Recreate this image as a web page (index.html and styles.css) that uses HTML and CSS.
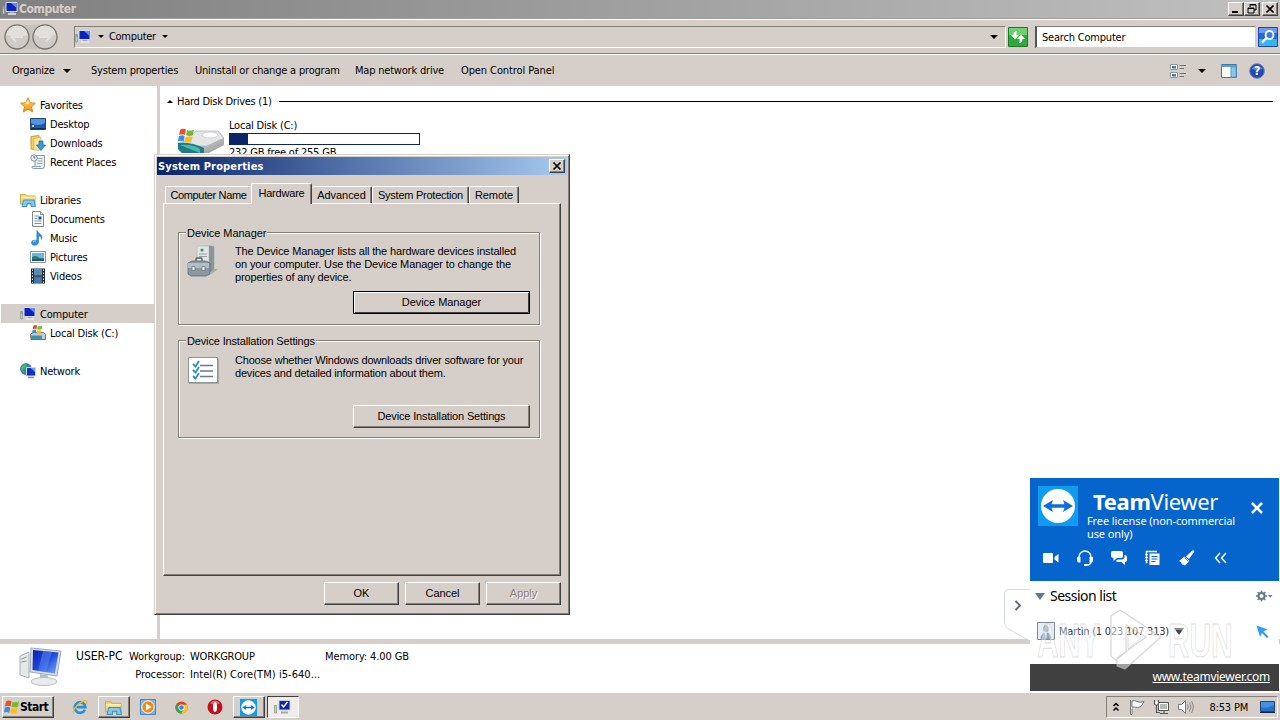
FILE: index.html
```
<!DOCTYPE html>
<html lang="en">
    <head>
        <meta charset="UTF-8" />
        <meta name="viewport" content="width=device-width, initial-scale=1.0" />
        <title>Computer</title>
        <link rel="stylesheet" href="styles.css">
    </head>
    <body>
        <svg width="0" height="0" class="defs">
            <defs>
                <linearGradient id="screenBlue" x1="0" y1="0" x2="1" y2="1">
                    <stop offset="0" stop-color="#0a1fae" />
                    <stop offset="0.5" stop-color="#1d49d8" />
                    <stop offset="1" stop-color="#7fb0ff" />
                </linearGradient>
                <linearGradient id="metal" x1="0" y1="0" x2="1" y2="1">
                    <stop offset="0" stop-color="#fafafa" />
                    <stop offset="1" stop-color="#8e9294" />
                </linearGradient>
                <linearGradient id="gold" x1="0" y1="0" x2="0" y2="1">
                    <stop offset="0" stop-color="#ffe27a" />
                    <stop offset="1" stop-color="#f08a12" />
                </linearGradient>
            </defs>
            <symbol id="pc" viewBox="0 0 16 16">
                <path d="M0.500 5.500h2v7.500h-2z" fill="#c9ccc8" stroke="#8a9088" stroke-width="0.700" />
                <path d="M1 7h1.500" stroke="#4fa04f" />
                <path d="M4 1.500h11v9H4z" fill="#0c22c0" stroke="#d5dcec" />
                <path d="M9 2h5.500v5z" fill="#5e8cf0" />
                <path d="M8 11h4v1.500H8z" fill="#a4a8ac" />
                <path d="M6 13h8" stroke="#e8eaec" stroke-width="1.500" />
            </symbol>
            <symbol id="flag" viewBox="0 0 16 16">
                <path d="M2 2.500C4 1 6 1.500 7.500 2.300L6.500 7.500C5 6.500 3 6.500 1 7.500z" fill="#e8502a" />
                <path d="M8.500 2.800C10 3.600 12.500 3.500 15 2.500L14 7.800C12 8.600 9.500 8.500 7.500 7.800z" fill="#7ab82e" />
                <path d="M0.800 8.700C3 7.500 5 7.600 6.200 8.600L5.200 13.800C3.500 12.600 1.800 12.700 0 13.500z" fill="#3a8fe0" />
                <path d="M7.200 9C9.500 9.800 11.500 9.800 13.700 9L12.500 14C10.500 14.800 8.500 14.800 6.200 14z" fill="#fbbc1c" />
            </symbol>
            <symbol id="star" viewBox="0 0 16 16">
                <path d="M8 0.800L10.200 5.700 15.400 6.200 11.500 9.700 12.700 15 8 12.200 3.300 15 4.500 9.700 0.600 6.200 5.800 5.700z" fill="url(#gold)" stroke="#e08a1c" />
                <path d="M8 3L9.200 6.800H5z" fill="#fff3b0" />
            </symbol>
            <symbol id="desk" viewBox="0 0 16 16">
                <path d="M0.500 2.500h15v11h-15z" fill="#2457a8" stroke="#28446e" />
                <path d="M1 3h14v4Q8 11 1 7z" fill="#4f97e0" />
                <path d="M1 12h14v1.500H1z" fill="#123060" />
                <path d="M2 9h2v2H2z" fill="#a6cdf0" />
            </symbol>
            <symbol id="down" viewBox="0 0 16 16">
                <path d="M1 1.500L9 0.500V15L1 14z" fill="#f0cf62" stroke="#c99c34" />
                <path d="M4 3.500L11 2V15H4z" fill="#f9e79a" stroke="#d2aa44" stroke-width="0.600" />
                <path d="M9 6h4v4h2.500L11 15.500 6.500 10H9z" fill="#2f9ae6" stroke="#1668b0" stroke-width="0.700" />
            </symbol>
            <symbol id="recent" viewBox="0 0 16 16">
                <path d="M5 1.500h9.500v11q0 2-2 2H3.500q-2 0-1.500-2h3z" fill="#edf1f4" stroke="#8a99a6" />
                <path d="M7.500 4.500h5M7.500 7h5M7.500 9.500h5M5 12.500h6" stroke="#8fa6b8" />
                <circle cx="4" cy="4" r="3.200" fill="#e8edf0" stroke="#8796a2" />
                <path d="M4 2v2h1.500" fill="none" stroke="#566" stroke-width="0.800" />
            </symbol>
            <symbol id="lib" viewBox="0 0 16 16">
                <path d="M0.500 2.500h5l1 1.500h8.500v8H0.500z" fill="#f5d878" stroke="#cda844" />
                <path d="M1 5.500h14" stroke="#fff4bb" stroke-width="1.500" />
                <path d="M3.500 8h10.500l1.500 6.500H11V11.500H7V14.500H2z" fill="#7fc8ee" stroke="#3c92c8" />
            </symbol>
            <symbol id="doc" viewBox="0 0 16 16">
                <path d="M2.500 0.500h8l3 3v12h-11z" fill="#fff" stroke="#7b8a99" />
                <path d="M10.500 0.500v3h3" fill="#d9e4ee" stroke="#7b8a99" />
                <path d="M4.500 5h4M4.500 7.500h3M4.500 10h7M4.500 12.500h7" stroke="#6b94c0" />
                <path d="M8.500 5.500h3v3h-3z" fill="#234f88" />
            </symbol>
            <symbol id="music" viewBox="0 0 16 16">
                <path d="M7 0.500C8 4 13.500 4 11.500 9.500 11.500 6.500 10 6 8.500 6V12C8.500 16 1.500 16.500 1.500 12.800 1.500 10.500 4.500 9.500 6.800 10.500z" fill="#2d93dc" stroke="#1a6fb8" stroke-width="0.600" />
                <path d="M3 12q1-1.500 3-1" stroke="#a8dcfa" fill="none" />
            </symbol>
            <symbol id="pic" viewBox="0 0 16 16">
                <path d="M0.500 2.500h15v11h-15z" fill="#fff" stroke="#8694a2" />
                <path d="M2 4h12v8H2z" fill="#68b5e6" />
                <path d="M2 8q4-2 6 0t6 1v3H2z" fill="#2c7c6c" />
                <path d="M2 10.500h12v1.500H2z" fill="#1d4a68" />
            </symbol>
            <symbol id="video" viewBox="0 0 16 16">
                <path d="M1 0.500h14v15H1z" fill="#222b33" />
                <path d="M4 1h8v6.500H4z" fill="#4b93cc" />
                <path d="M4 8.500h8V15H4z" fill="#3a7ab4" />
                <path d="M6 3l4 2-3 2zM6 11l3-1 1 3z" fill="#b06a38" />
                <path d="M2.500 1.500v14M13.500 1.500v14" stroke="#dfe5ea" stroke-dasharray="1.500 1.500" />
            </symbol>
            <symbol id="disk" viewBox="0 0 16 16">
                <path d="M0.500 9l3-1.500h10l2 2v5H1z" fill="#c3cbd0" stroke="#67747c" />
                <path d="M1 10.500h11v3.500H1z" fill="#3b96ab" />
                <use href="#flag" x="2" y="-1" width="11" height="11" />
            </symbol>
            <symbol id="net" viewBox="0 0 16 16">
                <circle cx="6" cy="6" r="5.500" fill="#2c7fd0" stroke="#1a579c" stroke-width="0.600" />
                <path d="M2 3q3-3 5-1.500L6 5 3 7 5 10Q1 9 1 5z" fill="#4fb45a" />
                <path d="M6.500 4.500h9v8.500h-9z" fill="#1330b8" stroke="#cfd8e4" />
                <path d="M10.500 5h4.500v4z" fill="#6c9cf4" />
                <path d="M8 14.500h6" stroke="#8a9096" stroke-width="1.500" />
            </symbol>
            <symbol id="tv" viewBox="0 0 40 40">
                <path d="M0 0h40v40H0z" fill="#0e9bf0" />
                <circle cx="20" cy="20" r="17" fill="#fff" />
                <path d="M5 20l10-6-1.500 4.200h13L25 14l10 6-10 6 1.500-4.200h-13L15 26z" fill="#0a6fd6" />
            </symbol>
        </svg>

        <div class="desktop">
            <div class="titlebar">
                <svg class="ic16"><use href="#pc" /></svg>
                <span class="title">Computer</span>
                <div class="win-btns">
                    <span class="win-btn"><svg viewBox="0 0 14 12"><path d="M3 9h6" stroke="#000" stroke-width="2" /></svg></span>
                    <span class="win-btn"><svg viewBox="0 0 14 12"><path d="M5 2h6v5H9M5 1.500h6M5 1v3M3 5h6v5H3zM3 5.500h6" fill="none" stroke="#000" /></svg></span>
                    <span class="win-btn last"><svg viewBox="0 0 14 12"><path d="M3.500 2.500l7 7M10.500 2.500l-7 7" stroke="#000" stroke-width="1.700" /></svg></span>
                </div>
            </div>

            <div class="addressbar">
                <svg class="nav-btns" width="56" height="28" viewBox="0 0 56 28">
                    <path d="M14 2h28v24H14z" fill="#c6c2bc" />
                    <circle cx="14" cy="14" r="12" fill="#cfcbc6" stroke="#77736e" stroke-width="1.300" />
                    <circle cx="42" cy="14" r="12" fill="#cfcbc6" stroke="#77736e" stroke-width="1.300" />
                    <path d="M3.500 12a10.500 9.500 0 0 1 21 0q-10 3-21 0zM31.500 12a10.500 9.500 0 0 1 21 0q-10 3-21 0z" fill="#e2dfdb" />
                    <path d="M20 14H9M13 9.500L8.500 14l4.500 4.500M36 14h11M43 9.500l4.500 4.500-4.500 4.500" fill="none" stroke="#e4e1dd" stroke-width="2" />
                </svg>
                <div class="address">
                    <svg class="ic16"><use href="#pc" /></svg>
                    <span class="arrow small"></span>
                    <span class="crumb">Computer</span>
                    <span class="arrow small"></span>
                    <span class="arrow end"></span>
                </div>
                <svg class="refresh" width="20" height="20" viewBox="0 0 20 20">
                    <path d="M0.500 0.500h19v19h-19z" fill="#2fa83c" stroke="#1c7a2a" />
                    <path d="M1 1h18v7H1z" fill="#6fd06f" />
                    <path d="M9 4Q5.500 4 5.500 8H3l4 4.500L11 8H8.500Q8 6 9 4zM11 16q3.500 0 3.500-4H17l-4-4.500L9 12h2.500q.5 2-.5 4z" fill="#fff" />
                </svg>
                <div class="search">Search Computer</div>
                <svg class="search-btn" width="20" height="20" viewBox="0 0 20 20">
                    <path d="M0.500 0.500h19v19h-19z" fill="#2468d8" stroke="#1a4aa8" />
                    <path d="M1 12h18v7H1z" fill="#38b4ee" />
                    <path d="M1 1h18v5H1z" fill="#6a9aee" />
                    <circle cx="11.500" cy="8" r="4" fill="#3f7be0" stroke="#fff" stroke-width="1.800" />
                    <path d="M8.500 11L4 15.500" stroke="#fff" stroke-width="2.400" />
                </svg>
            </div>

            <div class="toolbar">
                <span class="tool organize">Organize</span>
                <span class="arrow"></span>
                <span class="tool sysprops">System properties</span>
                <span class="tool uninstall">Uninstall or change a program</span>
                <span class="tool mapdrive">Map network drive</span>
                <span class="tool control">Open Control Panel</span>
                <div class="tool-right">
                    <svg width="17" height="16" viewBox="0 0 17 16">
                        <path d="M0.500 1.500h7v5h-7zM0.500 9.500h7v5h-7z" fill="#fff" stroke="#8d989f" />
                        <path d="M2 3h4v2.500H2zM2 11h4v2.500H2z" fill="#4478a4" />
                        <path d="M9.500 2.500H16M9.500 5.500H14M9.500 10.500H16M9.500 13.500H14" stroke="#6d7378" />
                    </svg>
                    <span class="arrow"></span>
                    <svg class="pane" width="16" height="14" viewBox="0 0 16 14">
                        <path d="M0.500 0.500h15v13h-15z" fill="#fff" stroke="#3f78a8" />
                        <path d="M0.500 2h15" stroke="#5aa0cc" stroke-width="2" />
                        <path d="M10 3h5v10h-5z" fill="#8cc8ea" stroke="#5a9ac4" />
                    </svg>
                    <svg width="16" height="16" viewBox="0 0 16 16">
                        <circle cx="8" cy="8" r="7.300" fill="#2347b4" stroke="#6a7fb8" />
                        <path d="M2.500 6a6 5 0 0 1 11 0q-5 2-11 0z" fill="#5c82dc" />
                        <text x="8" y="12.300" class="help">?</text>
                    </svg>
                </div>
            </div>

            <div class="content">
                <div class="sidebar">
                    <div class="section">
                        <div class="item head"><svg class="ic16"><use href="#star" /></svg><span>Favorites</span></div>
                        <div class="item"><svg class="ic16"><use href="#desk" /></svg><span>Desktop</span></div>
                        <div class="item"><svg class="ic16"><use href="#down" /></svg><span>Downloads</span></div>
                        <div class="item"><svg class="ic16"><use href="#recent" /></svg><span>Recent Places</span></div>
                    </div>
                    <div class="section">
                        <div class="item head"><svg class="ic16"><use href="#lib" /></svg><span>Libraries</span></div>
                        <div class="item"><svg class="ic16"><use href="#doc" /></svg><span>Documents</span></div>
                        <div class="item"><svg class="ic16"><use href="#music" /></svg><span>Music</span></div>
                        <div class="item"><svg class="ic16"><use href="#pic" /></svg><span>Pictures</span></div>
                        <div class="item"><svg class="ic16"><use href="#video" /></svg><span>Videos</span></div>
                    </div>
                    <div class="section">
                        <div class="item head selected"><svg class="ic16"><use href="#pc" /></svg><span>Computer</span></div>
                        <div class="item"><svg class="ic16"><use href="#disk" /></svg><span>Local Disk (C:)</span></div>
                    </div>
                    <div class="section">
                        <div class="item head"><svg class="ic16"><use href="#net" /></svg><span>Network</span></div>
                    </div>
                </div>
                <div class="splitter"></div>
                <div class="files">
                    <div class="group-head">
                        <span class="arrow up"></span>
                        <span class="group-name">Hard Disk Drives (1)</span>
                        <span class="rule"></span>
                    </div>
                    <div class="drive">
                        <svg width="48" height="34" viewBox="0 0 48 34">
                            <path d="M1 22L19 12h22l6 7v7L28 36H6l-5-5z" fill="url(#metal)" />
                            <path d="M19 12h22l6 7-17 8H2z" fill="#e4e6e6" stroke="#aab0b2" stroke-width="0.700" />
                            <ellipse cx="33" cy="16" rx="8" ry="3" fill="#fafbfb" stroke="#c4c8ca" stroke-width="0.700" />
                            <path d="M1 24q14-1 26 5v6H6l-5-5z" fill="#1f7c86" />
                            <path d="M3 26q12-1 20 4v4z" fill="#49b9ae" />
                            <use href="#flag" x="1" y="8" width="17" height="17" />
                        </svg>
                        <div class="drive-info">
                            <div>Local Disk (C:)</div>
                            <div class="meter"><div class="meter-fill"></div></div>
                            <div class="free">232 GB free of 255 GB</div>
                        </div>
                    </div>
                </div>
            </div>

            <div class="details">
                <svg width="44" height="40" viewBox="0 0 44 40">
                    <path d="M2 9l9-4v26l-9-3z" fill="#e5e7e8" stroke="#a9adb0" />
                    <path d="M3.500 12l5-2M3.500 15l5-1" stroke="#8c9296" />
                    <path d="M13 1l30 3-4 25-27-4z" fill="#d8dde4" stroke="#a4abb4" />
                    <path d="M15 3l25.500 2.500L37 26.500 14.500 23z" fill="url(#screenBlue)" />
                    <path d="M25 4l9 1L28 25l-8-1z" fill="#5d8cf4" opacity="0.500" />
                    <path d="M22 27l8 1.500v4h-8z" fill="#b9bec2" />
                    <ellipse cx="26" cy="34.500" rx="13" ry="4" fill="#e8eaeb" stroke="#bbc0c3" />
                </svg>
                <div class="d-name">USER-PC</div>
                <div class="d-grid">
                    <span class="label">Workgroup:</span><span>WORKGROUP</span>
                    <span class="label">Processor:</span><span class="cpu">Intel(R) Core(TM) i5-640...</span>
                </div>
                <div class="d-mem">Memory: 4.00 GB</div>
            </div>

            <div class="taskbar">
                <div class="start"><svg class="ic16"><use href="#flag" /></svg>Start</div>
                <div class="task ie">
                    <svg width="16" height="16" viewBox="0 0 18 18">
                        <path d="M14.500 12A6 6 0 1 1 15 9.200H5" fill="none" stroke="#2590dc" stroke-width="3" />
                        <path d="M2 16C-1 13 10 1 16 2c1.500 0.500 1 2.500 0 4" fill="none" stroke="#f0bb2e" stroke-width="1.500" />
                    </svg>
                </div>
                <div class="task raised"><svg width="17" height="17"><use href="#lib" /></svg></div>
                <div class="task">
                    <svg width="16" height="16" viewBox="0 0 16 16">
                        <path d="M0.500 0.500h15v15h-15z" fill="#74b4e6" stroke="#4688c4" />
                        <circle cx="8" cy="8" r="6.200" fill="#f28a16" stroke="#fff" />
                        <path d="M6 4.500l5.500 3.500L6 11.500z" fill="#fff" />
                    </svg>
                </div>
                <div class="task">
                    <svg width="13" height="13" viewBox="0 0 16 16">
                        <circle cx="8" cy="8" r="7.500" fill="#e33b2e" />
                        <path d="M8 8L1.500 4.200A7.500 7.500 0 0 0 7.500 15.500L11 9.500z" fill="#2da94f" />
                        <path d="M8 4.500h6.700A7.500 7.500 0 0 1 7.500 15.500L11.200 9.500z" fill="#fcc61c" />
                        <circle cx="8" cy="8" r="3.800" fill="#fff" />
                        <circle cx="8" cy="8" r="2.800" fill="#3d7fe8" />
                    </svg>
                </div>
                <div class="task">
                    <svg width="16" height="16" viewBox="0 0 16 16">
                        <ellipse cx="8" cy="8" rx="7.500" ry="7.500" fill="#c0121c" />
                        <path d="M3 4q5-5 10 0-5 3-10 0z" fill="#e46260" />
                        <ellipse cx="8" cy="8" rx="2" ry="5" fill="#fff" />
                    </svg>
                </div>
                <div class="task raised"><svg width="17" height="17"><use href="#tv" /></svg></div>
                <div class="task pressed">
                    <svg width="17" height="16" viewBox="0 0 17 16">
                        <path d="M0.500 6.500h2v7.500h-2z" fill="#cfd2cf" stroke="#848a82" stroke-width="0.700" />
                        <path d="M5 1.500h11v9.500H5z" fill="#1224a0" stroke="#c6cede" />
                        <path d="M7.500 5.500l2 2.500 4-5" fill="none" stroke="#fff" stroke-width="1.300" />
                        <path d="M7 13.500h7" stroke="#a4a8aa" stroke-width="2" />
                    </svg>
                </div>
                <div class="tray">
                    <svg width="8" height="10" viewBox="0 0 8 10"><path d="M1.500 4L4 1.500 6.500 4M1.500 8.500L4 6l2.500 2.500" fill="none" stroke="#000" stroke-width="1.500" /></svg>
                    <svg class="t-flag" width="17" height="16" viewBox="0 0 17 16">
                        <path d="M1.500 1v14.500h1.500V10" fill="#fff" stroke="#777" />
                        <path d="M3 2q3-1 5 0.500 3 1.500 7 0-1 2-3 5-4 2-6.500 0.500H3z" fill="#fff" stroke="#777" />
                    </svg>
                    <svg width="17" height="16" viewBox="0 0 17 16">
                        <path d="M5.500 3.500h10v8h-10z" fill="#b9b8b4" stroke="#555" />
                        <path d="M6.500 4.500h8v6h-8z" fill="none" stroke="#fff" />
                        <path d="M7 14.500h8M11 12v2" stroke="#555" />
                        <path d="M1.500 1v4q2 2 4 0V1M3.500 6v7.500H7" fill="none" stroke="#555" stroke-width="1.200" />
                        <path d="M2.500 2h2v3.500h-2z" fill="#fff" />
                    </svg>
                    <svg class="t-vol" width="17" height="16" viewBox="0 0 17 16">
                        <path d="M1.500 5.500h3L8.500 1.500v13L4.500 10.500h-3z" fill="#fff" stroke="#777" />
                        <path d="M10.500 5.500q1.500 2.500 0 5M12.500 3.500q3 4.500 0 9M14.500 2q3.500 6 0 12" fill="none" stroke="#888" />
                    </svg>
                    <span class="clock">8:53 PM</span>
                    <svg class="t-desk" width="15" height="14" viewBox="0 0 15 14">
                        <path d="M0.500 1.500h14v10h-14z" fill="#2a6fc4" stroke="#2a4468" />
                        <path d="M1 2h13v3Q7 9 1 7z" fill="#3f92e4" />
                        <path d="M0 12.500h15" stroke="#10284c" />
                    </svg>
                </div>
            </div>
        </div>

        <div class="dialog">
            <div class="dlg-title">
                <span>System Properties</span>
                <span class="win-btn"><svg viewBox="0 0 14 12"><path d="M3.500 2.500l7 7M10.500 2.500l-7 7" stroke="#000" stroke-width="1.700" /></svg></span>
            </div>
            <div class="tabs">
                <div class="tab t1">Computer Name</div>
                <div class="tab t2 active">Hardware</div>
                <div class="tab t3">Advanced</div>
                <div class="tab t4">System Protection</div>
                <div class="tab t5">Remote</div>
            </div>
            <div class="panel">
                <div class="group g1">
                    <span class="legend">Device Manager</span>
                    <div class="g-body">
                        <svg width="32" height="34" viewBox="0 0 32 34">
                            <path d="M10 1l12-1 6 1v25l-6 2H10z" fill="#bfc4c6" />
                            <path d="M10 1h12v26H10z" fill="#e2e5e6" stroke="#adb3b6" stroke-width="0.600" />
                            <path d="M22 0.500l5 1v24l-5 2z" fill="#8c9497" />
                            <circle cx="15" cy="5" r="1.500" fill="#3d9150" />
                            <path d="M12 9h8M12 11.500h8" stroke="#9aa1a5" />
                            <path d="M26 24l5 0-8 6z" fill="#a9a6a1" />
                            <path d="M9 17v-3q0-1 1-1h4q1 0 1 1v3" fill="none" stroke="#555e64" stroke-width="1.300" />
                            <path d="M1 18l4-2h14l4 2v11l-4 2H4l-3-2z" fill="#8b989f" stroke="#58646b" stroke-width="0.700" />
                            <path d="M1 18h21v5H1z" fill="#b4bfc5" />
                            <path d="M5 21.500h3v4H5zM15 21.500h3v4h-3z" fill="#e4e8ea" stroke="#59646a" stroke-width="0.600" />
                        </svg>
                        <div class="g-text">
                            <div class="l1">The Device Manager lists all the hardware devices installed</div>
                            <div class="l2">on your computer. Use the Device Manager to change the</div>
                            <div class="l3">properties of any device.</div>
                        </div>
                    </div>
                    <div class="btn wide default">Device Manager</div>
                </div>
                <div class="group g2">
                    <span class="legend tight">Device Installation Settings</span>
                    <div class="g-body">
                        <svg class="checks" width="31" height="27" viewBox="0 0 31 27">
                            <path d="M1 1.500h30v25.500H1z" fill="#aaa7a2" />
                            <path d="M0.500 0.500h29v25h-29z" fill="#fff" stroke="#8c969d" />
                            <path d="M12 8.500h13M12 14h13M12 19.500h13" stroke="#6b7890" stroke-width="1.300" />
                            <path d="M5 7l2.500 2.500L11 4M5 13l2.500 2.500L11 10M5 19l2.500 2.500L11 16" fill="none" stroke="#2b8fc8" stroke-width="1.800" />
                        </svg>
                        <div class="g-text">
                            <div class="m1">Choose whether Windows downloads driver software for your</div>
                            <div class="m2">devices and detailed information about them.</div>
                        </div>
                    </div>
                    <div class="btn wide tight">Device Installation Settings</div>
                </div>
            </div>
            <div class="dlg-btns">
                <div class="btn">OK</div>
                <div class="btn">Cancel</div>
                <div class="btn disabled">Apply</div>
            </div>
        </div>

        <div class="tv-wrap">
            <svg class="tv-handle" width="27" height="54" viewBox="0 0 27 54">
                <path d="M27 0.500H5.500q-5 0-5 5v28q0 4 4 6.500L27 52.500z" fill="#fff" stroke="#d4dae2" />
                <path d="M11.500 12l4.500 4.500-4.500 4.500" fill="none" stroke="#5c6b7c" stroke-width="1.900" />
            </svg>
            <div class="tv-panel">
                <div class="tv-head">
                    <div class="tv-brand">
                        <svg width="40" height="40"><use href="#tv" /></svg>
                        <div class="tv-name">
                            <div class="tv-logo"><b>Team</b>Viewer</div>
                            <div class="tv-lic">Free license (non-commercial<br>use only)</div>
                        </div>
                        <svg class="tv-close" width="12" height="12" viewBox="0 0 12 12"><path d="M1 1l10 10M11 1L1 11" stroke="#fff" stroke-width="2.500" /></svg>
                    </div>
                    <div class="tv-icons">
                        <svg viewBox="0 0 18 18"><path d="M2 4h8q1 0 1 1v8q0 1-1 1H2q-1 0-1-1V5q0-1 1-1zM12.500 8l4-3v8.500l-4-3z" fill="#fff" /></svg>
                        <svg viewBox="0 0 18 18">
                            <path d="M3 11V8a6 6 0 0 1 12 0v4q0 4-4 4" fill="none" stroke="#fff" stroke-width="1.500" />
                            <path d="M1 8h3.500v5.500H3q-2 0-2-2zM13.500 8H17v3.500q0 2-2 2h-1.500zM8 15h3v2H8z" fill="#fff" />
                        </svg>
                        <svg viewBox="0 0 18 18">
                            <path d="M3 2h8q2 0 2 2v3q0 2-2 2H7L3.500 12V9Q1 9 1 7V4Q1 2 3 2z" fill="#fff" />
                            <path d="M14.500 6Q17 6 17 8v3q0 2-2 2v3l-3.500-3H8q-1.500 0-2-1.500L8 10.500h4q2.500 0 2.500-3z" fill="#fff" />
                        </svg>
                        <svg viewBox="0 0 18 18">
                            <path d="M3.500 13.500h-1v-11H13" fill="none" stroke="#fff" stroke-width="1.500" />
                            <path d="M1 5.500h3M1 8.500h3M1 11.500h3" stroke="#fff" />
                            <path d="M5.500 4.500h10v11.500h-10z" fill="#fff" />
                            <path d="M7.500 7.500h6M7.500 10h6M7.500 12.500h4" stroke="#0565cd" stroke-width="1.200" />
                        </svg>
                        <svg viewBox="0 0 18 18">
                            <path d="M15 1l1.500 1.500L11 10 8 7.500z" fill="#fff" />
                            <path d="M6.500 7.500l5 4.500-4.500 4.500L5 15.500l-1 .5.500-1.500L3 14.500l.5-1L1 12z" fill="#fff" />
                            <path d="M6.500 8.500l4 4" stroke="#0565cd" stroke-width="0.800" />
                        </svg>
                        <svg viewBox="0 0 18 18"><path d="M8 4L3.500 9 8 14M14 4L9.500 9l4.500 5" fill="none" stroke="#fff" stroke-width="1.500" /></svg>
                    </div>
                </div>
                <div class="tv-body">
                    <div class="tv-session">
                        <span class="tri"></span>
                        <span class="session-label">Session list</span>
                        <svg width="17" height="12" viewBox="0 0 17 12">
                            <circle cx="5.500" cy="6" r="3" fill="none" stroke="#64788c" stroke-width="2" />
                            <path d="M5.500 0.500v2M5.500 9.500v2M0 6h2M9 6h2M1.600 2.100L3 3.500M8 8.500l1.400 1.400M9.400 2.100L8 3.500M3 8.500L1.600 9.900" stroke="#64788c" stroke-width="1.500" />
                            <path d="M12 5h4.500l-2.200 2.500z" fill="#64788c" />
                        </svg>
                    </div>
                    <div class="tv-user">
                        <svg width="18" height="18" viewBox="0 0 18 18">
                            <path d="M0.500 0.500h17v17h-17z" fill="#e6eef4" stroke="#7d8b97" />
                            <ellipse cx="9" cy="6.500" rx="2.700" ry="3.500" fill="#8fa5b7" />
                            <path d="M3.500 17q0-6 5.500-6.500 5.500.5 5.500 6.500z" fill="#8fa5b7" />
                            <path d="M9 10.500v5" stroke="#fff" />
                        </svg>
                        <span class="user-name">Martin (1 023 107 313)</span>
                        <span class="tri dark"></span>
                        <svg class="cursor" width="13" height="13" viewBox="0 0 13 13"><path d="M0.500 0.500l11 4-4 2 5 5-1.500 1.500-5-5-2 4z" fill="#2f9cf2" /></svg>
                    </div>
                </div>
                <div class="tv-foot"><span>www.teamviewer.com</span></div>
            </div>
        </div>

        <div class="watermark">
            <span class="any">ANY</span>
            <svg width="60" height="64" viewBox="0 0 60 64">
                <path d="M16 2L57 29 21 61 13 58V50L42 29 22 17V44L12 52 7 48V8z" fill="#fff" fill-opacity="0.500" stroke="#bbb" stroke-width="1.200" stroke-opacity="0.600" />
                <path d="M24 23l13 7-13 11z" fill="#fff" fill-opacity="0.400" stroke="#bbb" stroke-opacity="0.500" />
            </svg>
            <span class="run">RUN</span>
        </div>
    </body>
</html>
```
FILE: styles.css
```
* {
    box-sizing: border-box;
}
body {
    margin: 0;
    width: 1280px;
    height: 720px;
    overflow: hidden;
    position: relative;
    font-family: "DejaVu Sans Condensed", "DejaVu Sans", sans-serif;
    font-stretch: condensed;
    font-size: 11px;
    line-height: 13px;
    letter-spacing: -0.2px;
    color: #000;
    background: #d4d0c8;
    white-space: nowrap;
}
svg {
    display: block;
    flex-shrink: 0;
}
.defs {
    position: absolute;
}
.ic16 {
    width: 16px;
    height: 16px;
}
.desktop {
    width: 1280px;
    height: 720px;
    display: flex;
    flex-direction: column;
    background: #d6cfc9;
}
.arrow {
    width: 0;
    height: 0;
    border: 4px solid transparent;
    border-top-color: #000;
    border-bottom: 0;
}
.arrow.small {
    border-width: 3px;
    border-bottom: 0;
}
.arrow.up {
    border: 3px solid transparent;
    border-top: 0;
    border-bottom-color: #000;
}

/* window title */
.titlebar {
    height: 19px;
    display: flex;
    align-items: center;
    padding: 0 2px;
    background: linear-gradient(90deg, #808080, #c0c0c0);
    border-bottom: 1px solid #a09c98;
}
.title {
    color: #d6cfc9;
    font-size: 12px;
    font-weight: bold;
    margin-left: 1px;
    letter-spacing: -0.4px;
}
.win-btns {
    margin-left: auto;
    display: flex;
}
.win-btn {
    width: 16px;
    height: 14px;
    background: #d6cfc9;
    border: 1px solid #fff;
    border-right-color: #404040;
    border-bottom-color: #404040;
    box-shadow: inset -1px -1px 0 #848078;
}
.win-btn.last {
    margin-left: 2px;
}

/* address row */
.addressbar {
    height: 35px;
    display: flex;
    align-items: center;
    padding: 0 2px 0 3px;
    border-top: 1px solid #fff;
    border-bottom: 1px solid #848078;
}
.address {
    width: 932px;
    height: 22px;
    margin-left: 15px;
    display: flex;
    align-items: center;
    border: 1px solid #848078;
    border-bottom-color: #fff;
    border-right-color: #fff;
}
.address .ic16 {
    margin: 0 7px 0 0;
}
.crumb {
    width: 48px;
    margin: 0 5px;
    letter-spacing: -0.3px;
}
.arrow.end {
    margin-left: auto;
    margin-right: 7px;
    border-width: 4px;
    border-bottom: 0;
}
.refresh {
    margin-left: 2px;
}
.search {
    width: 221px;
    height: 22px;
    margin: 0 2px 0 7px;
    padding: 4px 5px;
    background: #fff;
    border: 1px solid #848078;
    border-left: 2px solid #555;
    border-right-color: #d6cfc9;
    border-bottom-color: #d6cfc9;
}

/* command row */
.toolbar {
    height: 32px;
    display: flex;
    align-items: center;
    padding: 0 15px 0 12px;
    border-top: 1px solid #fff;
}
.organize {
    width: 44px;
    margin-right: 7px;
}
.sysprops {
    width: 88px;
    margin: 0 16px 0 20px;
}
.uninstall {
    width: 144px;
    margin-right: 16px;
}
.mapdrive {
    width: 90px;
    margin-right: 16px;
}
.control {
    letter-spacing: -0.1px;
}
.tool-right {
    margin-left: auto;
    display: flex;
    align-items: center;
}
.tool-right .arrow {
    margin-left: 11px;
}
.pane {
    margin: 0 12px 0 15px;
}
.help {
    fill: #fff;
    font-size: 12px;
    font-weight: bold;
    text-anchor: middle;
}

/* explorer body */
.content {
    height: 553px;
    display: flex;
    background: #fff;
}
.sidebar {
    width: 157px;
    padding: 9px 3px 0 1px;
}
.section {
    margin-bottom: 19px;
}
.item {
    height: 19px;
    display: flex;
    align-items: center;
    gap: 4px;
    padding-left: 29px;
}
.item span {
    padding-top: 2px;
}
.item.head {
    padding-left: 19px;
}
.item.selected {
    background: #d6cfc9;
}
.splitter {
    width: 3px;
    background: #d6cfc9;
}
.files {
    flex: 1;
    padding: 9px 7px 0 7px;
}
.group-head {
    display: flex;
    align-items: center;
}
.group-head .arrow {
    margin-right: 4px;
}
.group-name {
    letter-spacing: -0.27px;
}
.rule {
    flex: 1;
    height: 1px;
    margin-left: 7px;
    background: #000;
}
.drive {
    display: flex;
    margin: 11px 0 0 10px;
}
.drive-info {
    margin-left: 4px;
}
.meter {
    width: 191px;
    height: 12px;
    margin: 1px 0;
    border: 1px solid #0a246a;
}
.meter-fill {
    width: 18px;
    height: 10px;
    background: #0a246a;
}

/* details pane */
.details {
    height: 53px;
    display: flex;
    background: #fff;
    border-top: 5px solid #d6cfc9;
    padding: 3px 0 0 18px;
}
.d-name {
    width: 48px;
    margin: 3px 3px 0 14px;
    font-size: 12px;
    letter-spacing: 0;
}
.d-grid {
    display: grid;
    grid-template-columns: 58px 132px;
    column-gap: 5px;
    grid-auto-rows: 18px;
    padding-top: 3px;
}
.d-grid .label {
    text-align: right;
    letter-spacing: -0.1px;
}
.cpu {
    letter-spacing: 0.05px;
}
.d-mem {
    margin: 3px 0 0 3px;
    letter-spacing: -0.1px;
}

/* taskbar */
.taskbar {
    flex: 1;
    display: flex;
    align-items: flex-start;
    padding: 3px 2px 0;
    border-top: 1px solid #fff;
}
.start {
    width: 52px;
    height: 22px;
    display: flex;
    align-items: center;
    font-weight: bold;
    font-size: 12px;
    letter-spacing: -0.5px;
    padding-left: 1px;
    margin-right: 10px;
    border: 1px solid #fff;
    border-right-color: #404040;
    border-bottom-color: #404040;
    box-shadow: inset -1px -1px 0 #848078;
}
.task {
    width: 32px;
    height: 22px;
    margin-right: 1.8px;
    display: flex;
    align-items: center;
    justify-content: center;
}
.task.raised {
    border: 1px solid #fff;
    border-right-color: #404040;
    border-bottom-color: #404040;
    box-shadow: inset -1px -1px 0 #848078;
}
.task.pressed {
    background: #efecea;
    border: 1px solid #404040;
    border-right-color: #fff;
    border-bottom-color: #fff;
}
.tray {
    width: 172px;
    height: 22px;
    margin-left: auto;
    padding: 0 2px 0 5px;
    display: flex;
    align-items: center;
    border: 1px solid #848078;
    border-right-color: #fff;
    border-bottom-color: #fff;
}
.t-flag {
    margin: 0 7px 0 9px;
}
.t-vol {
    margin-left: 7px;
}
.clock {
    margin-left: auto;
}
.t-desk {
    margin-left: 12px;
}

/* System Properties window */
.dialog {
    position: absolute;
    left: 154px;
    top: 154px;
    width: 416px;
    height: 461px;
    padding: 1px;
    background: #d6cfc9;
    border: 1px solid #d6cfc9;
    border-right-color: #404040;
    border-bottom-color: #404040;
    box-shadow: inset 1px 1px 0 #fff, inset -1px -1px 0 #848078;
    font-family: "Liberation Sans", Arial, sans-serif;
    font-stretch: normal;
    letter-spacing: -0.05px;
}
.dlg-title {
    height: 18px;
    margin: 1px 1px 0;
    padding: 0 2px 0 1px;
    display: flex;
    align-items: center;
    justify-content: space-between;
    color: #fff;
    font-family: "DejaVu Sans Condensed", "DejaVu Sans", sans-serif;
    font-stretch: condensed;
    font-size: 11px;
    font-weight: bold;
    letter-spacing: 0.15px;
    background: linear-gradient(90deg, #0a246a, #a6caf0);
}
.tabs {
    display: flex;
    align-items: flex-end;
    height: 28px;
    padding-left: 9px;
}
.tab {
    height: 17px;
    padding-top: 2px;
    text-align: center;
    border: 1px solid #fff;
    border-right: 1px solid #404040;
    border-bottom: 0;
    border-radius: 2px 2px 0 0;
    box-shadow: inset -1px 0 0 #848078;
}
.tab.t1 {
    width: 86px;
    border-right: 0;
    box-shadow: none;
    letter-spacing: -0.35px;
}
.tab.t2 {
    width: 61px;
    height: 21px;
    padding-top: 3px;
    margin-bottom: -1px;
    background: #d6cfc9;
    letter-spacing: -0.2px;
}
.tab.t3 {
    width: 60px;
    border-left: 0;
}
.tab.t4 {
    width: 97px;
    letter-spacing: -0.25px;
}
.tab.t5 {
    width: 50px;
}
.panel {
    height: 373px;
    margin: 0 7px;
    padding: 28px 20px 0 14px;
    border: 1px solid #fff;
    border-right-color: #404040;
    border-bottom-color: #404040;
    box-shadow: inset -1px -1px 0 #848078;
}
.group {
    position: relative;
    border: 1px solid #848078;
    box-shadow: 1px 1px 0 #fff, inset 1px 1px 0 #fff;
    padding: 0 9px 0 7px;
    display: flex;
    flex-direction: column;
}
.g1 {
    height: 93px;
    margin-bottom: 15px;
}
.g2 {
    height: 98px;
}
.legend {
    align-self: flex-start;
    margin-top: -6px;
    padding: 0 1px;
    background: #d6cfc9;
}
.tight {
    letter-spacing: -0.15px;
}
.g-body {
    display: flex;
    margin: 5px 0 0 1px;
}
.g2 .g-body {
    margin-top: 6px;
}
.g-text {
    margin-left: 16px;
}
.l1,
.l3 {
    letter-spacing: -0.14px;
}
.l2 {
    letter-spacing: -0.11px;
}
.m1,
.m2 {
    letter-spacing: -0.19px;
}
.checks {
    margin: 3px 0 0 1px;
}
.btn {
    width: 75px;
    height: 23px;
    padding-top: 4px;
    text-align: center;
    border: 1px solid #fff;
    border-right-color: #404040;
    border-bottom-color: #404040;
    box-shadow: inset -1px -1px 0 #848078;
}
.btn.wide {
    width: 177px;
    position: absolute;
    right: 9px;
    bottom: 10px;
}
.g2 .btn.wide {
    bottom: 9px;
}
.btn.default {
    border-color: #000;
    box-shadow: inset 1px 1px 0 #fff, inset -1px -1px 0 #404040;
}
.btn.disabled {
    color: #848078;
    text-shadow: 1px 1px 0 #fff;
}
.dlg-btns {
    display: flex;
    justify-content: flex-end;
    gap: 6px;
    margin: 6px 7px 0 0;
}

/* session panel */
.tv-wrap {
    position: absolute;
    left: 1004px;
    top: 478px;
    width: 275px;
    display: flex;
    font-family: "Noto Sans", sans-serif;
    font-stretch: normal;
    letter-spacing: 0;
}
.tv-handle {
    margin: 111px -1px 0 0;
}
.tv-panel {
    width: 249px;
    height: 213px;
    display: flex;
    flex-direction: column;
    background: #fff;
    z-index: 1;
}
.tv-head {
    height: 103px;
    padding: 8px;
    background: #0565cd;
    color: #fff;
}
.tv-brand {
    display: flex;
    height: 63px;
}
.tv-name {
    margin-left: 9px;
}
.tv-logo {
    font-size: 22px;
    line-height: 26px;
    letter-spacing: -0.35px;
    margin: 2px 0 0 6px;
}
.tv-lic {
    letter-spacing: -0.1px;
}
.tv-close {
    margin: 16px 8px 0 auto;
}
.tv-icons {
    display: flex;
    gap: 16px;
    padding-left: 4px;
}
.tv-icons svg {
    width: 18px;
    height: 18px;
}
.tv-body {
    flex: 1;
    padding: 6px 6px 0 5px;
}
.tv-session,
.tv-user {
    display: flex;
    align-items: center;
}
.tri {
    border: 5px solid transparent;
    border-top: 7px solid #64788c;
    border-bottom: 0;
}
.tri.dark {
    border-top-color: #444;
    margin-left: 5px;
}
.session-label {
    font-size: 14px;
    line-height: 18px;
    letter-spacing: -0.5px;
    margin: 0 auto 0 5px;
}
.tv-user {
    margin: 17px 4px 0 2px;
}
.user-name {
    margin-left: 4px;
    font-family: "DejaVu Sans Condensed", "DejaVu Sans", sans-serif;
    font-stretch: condensed;
    letter-spacing: -0.22px;
    color: #333;
}
.cursor {
    margin-left: auto;
}
.tv-foot {
    height: 27px;
    padding: 6px 9px 0 0;
    text-align: right;
    color: #fff;
    background: #404040;
    font-size: 12px;
    letter-spacing: -0.28px;
    text-decoration: underline;
}

/* recorder watermark */
.watermark {
    position: absolute;
    z-index: 2;
    left: 1037px;
    top: 608px;
    width: 200px;
    height: 64px;
    display: flex;
    align-items: center;
    font-family: "Liberation Sans", Arial, sans-serif;
    font-size: 48px;
    font-weight: bold;
    line-height: 66px;
    letter-spacing: 0;
    color: rgba(255, 255, 255, 0.4);
    -webkit-text-stroke: 1px rgba(180, 180, 180, 0.45);
}
.watermark span {
    width: 64px;
    padding-top: 2px;
    transform: scaleX(0.62);
    transform-origin: 0 50%;
}
.watermark svg {
    margin: 0 4px 0 3px;
}
```
